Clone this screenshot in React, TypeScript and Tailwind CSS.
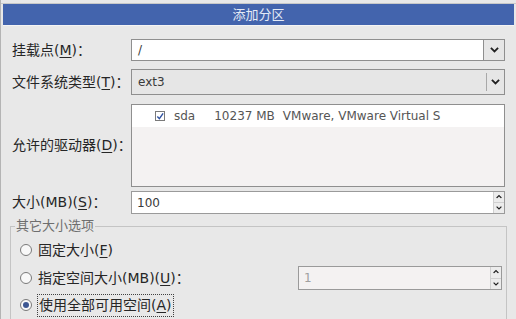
const Chevron = ({ up = false, size = 9 }: { up?: boolean; size?: number }) => (
  <svg width={size} height={size * 0.6} viewBox="0 0 10 6" className={up ? 'rotate-180' : ''}>
    <path d="M1 1 L5 5 L9 1" fill="none" stroke="#202020" strokeWidth="2" />
  </svg>
);

const Label = ({ text, mn, rest }: { text: string; mn: string; rest?: string }) => (
  <span className="whitespace-nowrap">
    {text}(<span className="underline underline-offset-2">{mn}</span>){rest ?? '：'}
  </span>
);

const Spin = ({ value, disabled = false, className = '' }: { value: string; disabled?: boolean; className?: string }) => (
  <div className={`flex border border-[#9a9a9a] ${disabled ? 'bg-[#f4f2f2]' : 'bg-white'} ${className}`}>
    <div className={`flex-1 flex items-center pl-[5px] text-[12px] ${disabled ? 'text-[#a0a0a0]' : 'text-[#3a3a3a]'}`}>{value}</div>
    <div className="w-[11px] flex flex-col border-l border-[#d0d0d0] bg-[#ececec]">
      <div className="flex-1 flex items-center justify-center border-b border-[#d0d0d0]">
        <Chevron up size={6} />
      </div>
      <div className="flex-1 flex items-center justify-center">
        <Chevron size={6} />
      </div>
    </div>
  </div>
);

const Radio = ({ checked = false }: { checked?: boolean }) => (
  <span className="w-[12px] h-[12px] rounded-full border border-[#7a7a7a] bg-[#f8f8f8] flex items-center justify-center shrink-0">
    {checked && <span className="w-[6px] h-[6px] rounded-full bg-[#3d5792]" />}
  </span>
);

export default function App() {
  return (
    <div className="w-[516px] h-[319px] overflow-hidden bg-[#e8e8e8] text-[14px] text-[#262626] font-['DejaVu_Sans','Noto_Sans_CJK_SC',sans-serif] border-l border-[#b4b4b4]">
      <div className="h-[4px] border-b border-[#c8c8c8]" />
      <div className="mx-[2px] h-[21px] bg-[#4364ad] flex items-center justify-center text-[13px] text-[#e4eaf6]">添加分区</div>
      <div className="h-[1px] mx-[2px] bg-[#f4f4f4]" />

      <div className="pl-[11px] mt-[13px] flex flex-col">
        {/* mount point */}
        <div className="flex items-center h-[22px]">
          <div className="w-[119px]"><Label text="挂载点" mn="M" /></div>
          <div className="flex w-[374px] h-[22px]">
            <div className="flex-1 bg-white border border-[#8f8f8f] flex items-center pl-[6px] text-[12px] text-[#3a3a3a]">/</div>
            <div className="w-[21px] border border-[#8f8f8f] border-l-0 bg-[#e6e6e6] flex items-center justify-center">
              <Chevron size={9} />
            </div>
          </div>
        </div>

        {/* fs type */}
        <div className="flex items-center h-[26px] mt-[8px]">
          <div className="w-[119px]"><Label text="文件系统类型" mn="T" /></div>
          <div className="flex items-center w-[374px] h-[26px] border border-[#8f8f8f] bg-[#e6e6e6]">
            <div className="flex-1 pl-[6px] text-[12px] text-[#3a3a3a]">ext3</div>
            <div className="w-px h-[18px] bg-[#a8a8a8]" />
            <div className="w-[17px] flex items-center justify-center">
              <Chevron size={9} />
            </div>
          </div>
        </div>

        {/* drives */}
        <div className="flex items-center h-[83px] mt-[9px]">
          <div className="w-[119px]"><Label text="允许的驱动器" mn="D" /></div>
          <div className="w-[374px] h-[83px] border border-[#8f8f8f] bg-[#f4f2f2] flex flex-col">
            <div className="h-[22px] bg-white flex items-center text-[12px] text-[#555555]">
              <span className="ml-[23px] w-[10px] h-[10px] border border-[#7a7a7a] bg-white flex items-center justify-center">
                <svg width="9" height="9" viewBox="0 0 9 9">
                  <path d="M1.5 4.5 L3.8 7 L8 1" fill="none" stroke="#3052a0" strokeWidth="1.6" />
                </svg>
              </span>
              <span className="ml-[9px]">sda</span>
              <span className="ml-[19px]">10237 MB</span>
              <span className="ml-[8px]">VMware, VMware Virtual S</span>
            </div>
          </div>
        </div>

        {/* size */}
        <div className="flex items-center h-[23px] mt-[4px]">
          <div className="w-[119px]"><Label text="大小(MB)" mn="S" /></div>
          <Spin value="100" className="w-[374px] h-[23px]" />
        </div>
      </div>

      {/* other size options */}
      <fieldset className="ml-[9px] w-[497px] mt-[5px] border border-[#c4c4c4] pb-[10px]">
        <legend className="ml-[4px] px-[1px] text-[13px] text-[#6e6e6e] leading-[14px]">其它大小选项</legend>
        <div className="flex flex-col pl-[9px]">
          <div className="flex items-center h-[24px] mt-[5px] gap-[6px]">
            <Radio />
            <Label text="固定大小" mn="F" rest="" />
          </div>
          <div className="flex items-center h-[24px] mt-[4px] gap-[6px]">
            <Radio />
            <Label text="指定空间大小(MB)" mn="U" />
            <div className="flex-1" />
            <Spin value="1" disabled className="w-[204px] h-[24px] mr-[4px]" />
          </div>
          <div className="flex items-center h-[24px] mt-[3px] gap-[5px]">
            <Radio checked />
            <span className="border border-dotted border-[#404040] px-[1px] h-[23px] flex items-center">
              <Label text="使用全部可用空间" mn="A" rest="" />
            </span>
          </div>
        </div>
      </fieldset>
    </div>
  );
}
